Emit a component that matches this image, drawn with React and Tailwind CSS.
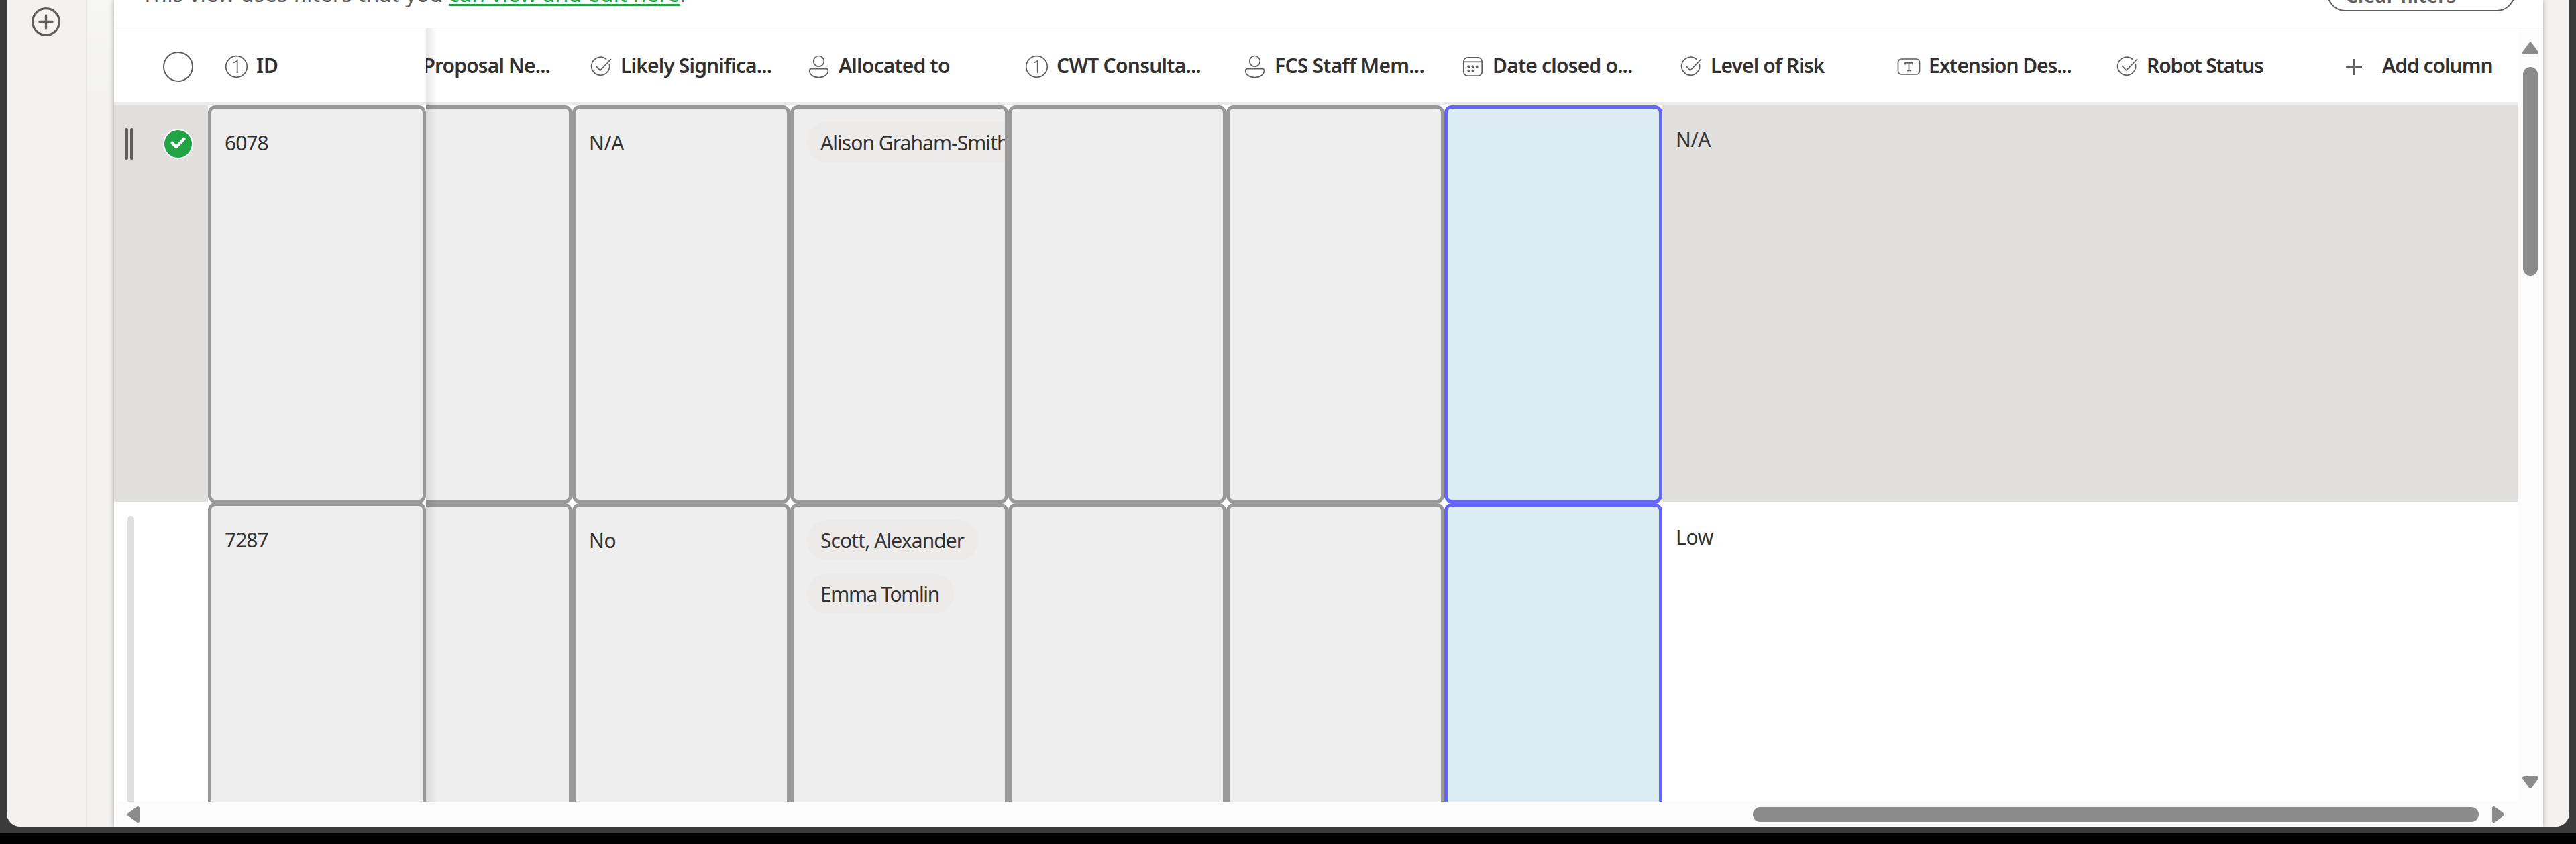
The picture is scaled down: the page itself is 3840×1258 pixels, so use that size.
const INK = "text-[#323130]";

function Icon({ name }) {
  return (
    <svg viewBox="0 0 35 35" fill="none" stroke="#605e5c" strokeWidth="1.7" className="h-[35px] w-[35px] shrink-0">
      {name === "number" && (
        <>
          <circle cx="17.5" cy="17.5" r="15.800" />
          <path d="M13 11.500c2.600-.6 4.600-1.600 5.700-3V27" />
        </>
      )}
      {name === "choice" && (
        <>
          <path d="M26.200 6.700A13.500 13.500 0 1 0 30.200 13.200" />
          <path d="M10.300 16.300l6.400 6.700L33 6" />
        </>
      )}
      {name === "person" && (
        <>
          <circle cx="17.500" cy="9.300" r="7.800" />
          <path d="M6.500 20.600h22c1.600 0 2.800 1.200 2.800 2.800 0 6-6 10.100-13.800 10.100S3.700 29.400 3.700 23.400c0-1.600 1.200-2.800 2.800-2.800z" />
        </>
      )}
      {name === "date" && (
        <>
          <rect x="3.800" y="3.800" width="27.400" height="27.400" rx="6" />
          <path d="M3.800 10.300h27.400" />
          <g fill="#605e5c" stroke="none">
            <circle cx="11.300" cy="17.500" r="2" />
            <circle cx="17.500" cy="17.500" r="2" />
            <circle cx="23.700" cy="17.500" r="2" />
            <circle cx="11.300" cy="23.800" r="2" />
            <circle cx="17.500" cy="23.800" r="2" />
          </g>
        </>
      )}
      {name === "text" && (
        <>
          <rect x="1.500" y="6" width="32" height="23" rx="5" />
          <path d="M12 14.500v-2.700h11v2.700M17.500 11.800v11.700M14.500 23.500h6" />
        </>
      )}
    </svg>
  );
}

function HeadCell({ icon, label, track }) {
  return (
    <div className="flex w-[325px] shrink-0 items-center pl-[25px]">
      <Icon name={icon} />
      <span className={`mb-[4px] ml-[12px] whitespace-nowrap text-[30px] font-semibold leading-[40px] ${track}`}>{label}</span>
    </div>
  );
}

const columns = [
  { icon: "choice", label: "Likely Significa...", track: "tracking-[-0.85px]" },
  { icon: "person", label: "Allocated to", track: "tracking-[-0.8px]" },
  { icon: "number", label: "CWT Consulta...", track: "tracking-[-0.75px]" },
  { icon: "person", label: "FCS Staff Mem...", track: "tracking-[-0.75px]" },
  { icon: "date", label: "Date closed o...", track: "tracking-[-0.8px]" },
  { icon: "choice", label: "Level of Risk", track: "tracking-[-0.9px]" },
  { icon: "text", label: "Extension Des...", track: "tracking-[-1.1px]" },
  { icon: "choice", label: "Robot Status", track: "tracking-[-1.15px]" },
];

const CELL = "w-[325px] shrink-0 overflow-hidden rounded-[11px] border-[5px]";
const GREY = "border-[#999999] bg-[#eeeeee]";
const BLUE = "border-[#6464ff] bg-[#dbecf3]";

function Chip({ children, track }) {
  return (
    <div className={`h-[60px] w-max whitespace-nowrap rounded-full bg-[#ecebe9] pl-[20px] pr-[22px] leading-[61px] ${track}`}>
      {children}
    </div>
  );
}

function Row({ id, choice, people, risk, selected, height, lead }) {
  const side = selected ? "bg-[#e0dfdd]" : "bg-white";
  return (
    <div className={`flex shrink-0 bg-white text-[30px] ${height}`}>
      <div className={`w-[140px] shrink-0 ${selected ? "mb-[2px]" : ""} ${side}`}>{lead}</div>
      <div className={`${CELL} ${GREY} ${selected ? "" : "-mt-px"} px-[20px] pt-[31px] leading-[40px] tracking-[-1px]`}>{id}</div>
      <div className={`w-[218px] shrink-0 rounded-r-[11px] border-y-[5px] border-r-[5px] ${GREY}`} />
      <div className={`${CELL} ${GREY} px-[20px] pt-[31px] leading-[40px] tracking-[-0.3px]`}>{choice}</div>
      <div className={`${CELL} ${GREY} flex flex-col gap-[20px] pl-[20px] pt-[20px]`}>
        {people.map((p) => (
          <Chip key={p.name} track={p.track}>{p.name}</Chip>
        ))}
      </div>
      <div className={`${CELL} ${GREY}`} />
      <div className={`${CELL} ${GREY}`} />
      <div className={`${CELL} ${BLUE}`} />
      <div className={`grow pl-[20px] pt-[31px] leading-[40px] tracking-[-0.3px] ${selected ? "mb-[2px]" : ""} ${side}`}>{risk}</div>
    </div>
  );
}

const headLead = (
  <div className="flex w-[140px] shrink-0 items-center pl-[73px]">
    <div className="h-[45px] w-[45px] rounded-full border-2 border-[#605e5c]" />
  </div>
);

const selectedLead = (
  <div className="flex items-center pl-[16px] pt-[34px]">
    <div className="h-[47px] w-[5px] rounded-full bg-[#605e5c]" />
    <div className="ml-[3px] h-[47px] w-[5px] rounded-full bg-[#605e5c]" />
    <svg viewBox="0 0 45 45" className="ml-[44px] h-[45px] w-[45px]">
      <circle cx="22.500" cy="22.500" r="22.500" fill="#fff" />
      <circle cx="22.500" cy="22.500" r="20.500" fill="#21a346" />
      <path d="M13.800 21l6 5.800L31.300 15" fill="none" stroke="#fff" strokeWidth="4.500" strokeLinecap="round" strokeLinejoin="round" />
    </svg>
  </div>
);

const plainLead = <div className="ml-[20px] mt-[19px] h-[500px] w-[10px] rounded-full bg-[#e1dfdd]" />;

function Triangle({ className }) {
  return (
    <svg viewBox="0 0 24 18" className={`shrink-0 ${className}`}>
      <path d="M12 2.500L21.500 15.500H2.500z" fill="#8b8b8b" stroke="#8b8b8b" strokeWidth="5" strokeLinejoin="round" />
    </svg>
  );
}

export default function App() {
  return (
    <div className={`h-[1258px] w-[3840px] overflow-hidden bg-black ${INK} font-['Noto_Sans','Open_Sans',sans-serif]`}>
      <div className="h-[1242px] bg-[#3b3b3b] px-[10px]">
        <div className="flex h-[1232px] overflow-hidden rounded-b-[20px] bg-[#f3f2f1]">
          <div className="w-[120px] shrink-0 border-r-2 border-[#e9e8e7] pl-[37px] pt-[11px]">
            <svg viewBox="0 0 43 43" fill="none" stroke="#605e5c" className="h-[43px] w-[43px]">
              <circle cx="21.500" cy="21.500" r="19.800" strokeWidth="3.300" />
              <path d="M21.500 12v19M12 21.500h19" strokeWidth="3.300" strokeLinecap="round" />
            </svg>
          </div>
          <div className="w-[40px] shrink-0 bg-linear-to-b from-[#f6f6f5] to-[#f3f2f1] to-[160px]" />
          <div className="flex w-[3621px] shrink-0 flex-col bg-white shadow-[0_0_8px_rgba(0,0,0,0.3)]">
            <div className="flex h-[42px] shrink-0 items-start justify-between border-b border-[#f6f6f6] pl-[41px] pr-[42px]">
              <p className="-mt-[34px] whitespace-nowrap text-[32px] leading-[50px] text-[#605e5c]">
                <span className="tracking-[0.3px]">This view uses filters that you </span>
                <span className="tracking-[0.35px] text-[#21a346] underline decoration-[3px] underline-offset-[3px]">can view and edit here</span>.
              </p>
              <div className="-mt-[37px] h-[54px] w-[280px] rounded-full border-2 border-[#605e5c] pl-[25px] text-[30px] font-semibold leading-[56px] tracking-[-0.3px] text-[#605e5c]">Clear filters</div>
            </div>
            <div className="flex min-h-0 grow">
              <div className="relative w-[3583px] shrink-0">
                <div className="flex h-[115px] border-b-[5px] border-[#ebebeb] pt-[5px]">
                  {headLead}
                  <HeadCell icon="number" label="ID" track="tracking-[0px]" />
                  <div className="flex w-[218px] shrink-0 items-center justify-end overflow-hidden pr-[33px]">
                    <span className="mb-[4px] whitespace-nowrap text-[30px] font-semibold leading-[40px] tracking-[-0.85px]">Proposal Ne...</span>
                  </div>
                  {columns.map((c) => (
                    <HeadCell key={c.label} {...c} />
                  ))}
                  <div className="flex items-center pl-[44px]">
                    <svg viewBox="0 0 24 24" className="h-6 w-6" stroke="#605e5c" strokeWidth="2">
                      <path d="M12 0v24M0 12h24" />
                    </svg>
                    <span className="mb-[4px] ml-[30px] whitespace-nowrap text-[30px] font-semibold leading-[40px] tracking-[-1px]">Add column</span>
                  </div>
                </div>
                <div className="flex h-[1038px] flex-col overflow-hidden">
                  <Row
                    selected
                    height="h-[593px]"
                    id="6078"
                    choice="N/A"
                    people={[{ name: "Alison Graham-Smith", track: "tracking-[-0.95px]" }]}
                    risk="N/A"
                    lead={selectedLead}
                  />
                  <Row
                    height="h-[593px]"
                    id="7287"
                    choice="No"
                    people={[
                      { name: "Scott, Alexander", track: "tracking-[-0.9px]" },
                      { name: "Emma Tomlin", track: "tracking-[-1.4px]" },
                    ]}
                    risk="Low"
                    lead={plainLead}
                  />
                </div>
                <div className="absolute left-[465px] top-0 h-[1153px] w-[16px] bg-linear-to-r from-black/10 to-transparent" />
                <div className="flex h-[37px] items-center bg-[#fcfcfc]">
                  <Triangle className="ml-[17px] h-[18px] w-[24px] -rotate-90" />
                  <div className="ml-[2402px] h-[22px] w-[1082px] rounded-full bg-[#8b8b8b]" />
                  <Triangle className="ml-[17px] h-[18px] w-[24px] rotate-90" />
                </div>
              </div>
              <div className="flex grow flex-col items-center bg-[#fcfcfc] pr-px pt-[21px]">
                <Triangle className="h-[18px] w-[24px]" />
                <div className="mt-[19px] h-[311px] w-[22px] rounded-full bg-[#8b8b8b]" />
                <Triangle className="mt-[746px] h-[18px] w-[24px] rotate-180" />
              </div>
            </div>
          </div>
        </div>
      </div>
    </div>
  );
}
